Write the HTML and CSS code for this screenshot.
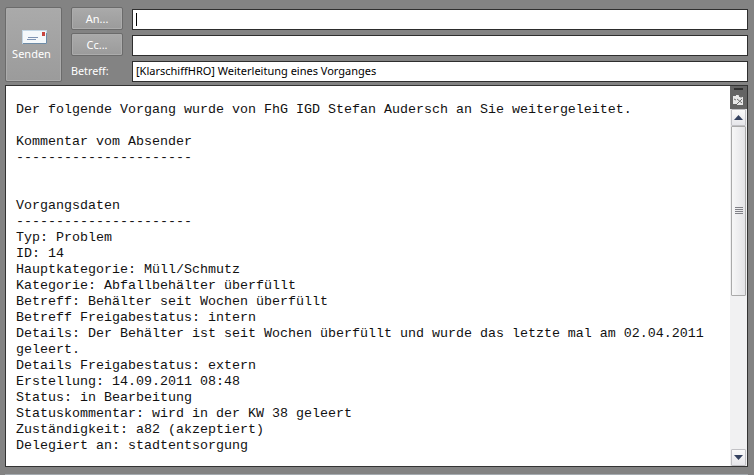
FILE: index.html
```
<!DOCTYPE html>
<html lang="de">
<head>
<meta charset="utf-8">
<title>Nachricht</title>
<link rel="stylesheet" href="styles.css">
</head>
<body>
<header class="header">
  <button class="btn send">
    <svg width="25" height="14" viewBox="0 0 25 14"><rect x=".5" y=".5" width="24" height="13" fill="#f4f8fb" stroke="#c3d6e4"/><path d="M1 13.500h23.500V3" fill="none" stroke="#6d8ba6"/><path d="M6 7.500h10M5 9.500h9" stroke="#7f94b4"/><path d="M20 2h3v4h-3z" fill="#c9453f"/></svg>
    <span>Senden</span>
  </button>
  <div class="labels">
    <button class="btn pick">An...</button>
    <button class="btn pick">Cc...</button>
    <span class="subject-label">Betreff:</span>
  </div>
  <div class="fields">
    <div class="field"><i class="caret"></i></div>
    <div class="field"></div>
    <div class="field"><span class="subject">[KlarschiffHRO] Weiterleitung eines Vorganges</span></div>
  </div>
</header>
<main class="message">
<pre class="text">Der folgende Vorgang wurde von FhG IGD Stefan Audersch an Sie weitergeleitet.

Kommentar vom Absender
----------------------


Vorgangsdaten
----------------------
Typ: Problem
ID: 14
Hauptkategorie: Müll/Schmutz
Kategorie: Abfallbehälter überfüllt
Betreff: Behälter seit Wochen überfüllt
Betreff Freigabestatus: intern
Details: Der Behälter ist seit Wochen überfüllt und wurde das letzte mal am 02.04.2011 geleert.
Details Freigabestatus: extern
Erstellung: 14.09.2011 08:48
Status: in Bearbeitung
Statuskommentar: wird in der KW 38 geleert
Zuständigkeit: a82 (akzeptiert)
Delegiert an: stadtentsorgung</pre>
  <div class="scroll">
    <div class="toggle"><svg width="17" height="23" viewBox="0 0 17 23"><path d="M4 3h9" stroke="#303030" stroke-width="2"/><path d="M3 10h3V9h3v2h4v8H7v-1H3z" fill="#e8e8e8"/><path d="M7 13l5 4M12 13l-5 5M4 13l2 1M9 9.500l2 2 2-2" fill="none" stroke="#707070"/></svg></div>
    <div class="arrow"><svg width="9" height="5" viewBox="0 0 9 5"><path d="M4.500 0L9 5H0z" fill="#34415f"/></svg></div>
    <div class="thumb"><i></i><i></i><i></i><i></i></div>
    <div class="arrow down"><svg width="9" height="5" viewBox="0 0 9 5"><path d="M0 0h9L4.500 5z" fill="#34415f"/></svg></div>
  </div>
</main>
<footer class="edge"></footer>
</body>
</html>
```
FILE: styles.css
```
* { box-sizing: border-box; }
body {
  margin: 0;
  width: 754px;
  height: 475px;
  overflow: hidden;
  padding: 7px 6px 0 5px;
  background: #838383;
  font-family: "Noto Sans", sans-serif;
  font-size: 11px;
}
.header { display: flex; height: 78px; }
.btn {
  margin: 0;
  padding: 0;
  border: 1px solid #6b6b6b;
  border-radius: 2px;
  background: linear-gradient(#aaa, #9b9b9b);
  box-shadow: inset 0 0 0 1px #acacac;
  color: #fff;
  font: inherit;
}
.send {
  width: 57px;
  height: 75px;
  display: flex;
  flex-direction: column;
  align-items: center;
  padding-top: 22px;
}
.send svg { margin-left: 2px; }
.send span { margin: 2px 4px 0 0; line-height: 15px; }
.labels { margin-left: 9px; width: 52px; display: flex; flex-direction: column; gap: 3px; }
.pick { height: 23px; line-height: 20px; }
.subject-label { color: #fff; font-size: 10.8px; line-height: 24px; }
.fields { flex: 1; margin: 2px 0 0 9px; display: flex; flex-direction: column; gap: 5px; }
.field {
  height: 21px;
  border: 1px solid #2e2e2e;
  background: #fff;
  padding-left: 3px;
  display: flex;
  align-items: center;
}
.caret { width: 1px; height: 13px; background: #000; }
.subject { font-size: 11px; line-height: 17px; padding-bottom: 2px; color: #000; white-space: nowrap; }
.message {
  display: flex;
  height: 382px;
  border: 1px solid #333;
  background: #fff;
}
.text {
  flex: 1;
  margin: 0;
  padding: 16px 16px 0 10px;
  font: 13.333px/16px "Liberation Mono", monospace;
  color: #111;
  white-space: pre-wrap;
}
.scroll { width: 17px; display: flex; flex-direction: column; background: #f1f1f2; }
.toggle { height: 23px; background: #646464; }
.toggle svg { display: block; }
.arrow {
  height: 17px;
  margin: 0 1px;
  border: 1px solid #c1c1c5;
  border-radius: 1px;
  background: linear-gradient(#fafafa, #e6e6ea);
  display: flex;
  align-items: center;
  justify-content: center;
}
.thumb {
  height: 170px;
  margin: 0 1px;
  border: 1px solid #aaa;
  border-radius: 1px;
  background: linear-gradient(90deg, #f7f7f7, #e4e4e7);
  display: flex;
  flex-direction: column;
  align-items: center;
  justify-content: center;
  gap: 1px;
  padding-bottom: 2px;
}
.thumb i { width: 8px; height: 1px; background: #808086; }
.down { margin-top: auto; }
.edge { height: 1px; margin-top: 7px; background: #a5abb0; }
```
